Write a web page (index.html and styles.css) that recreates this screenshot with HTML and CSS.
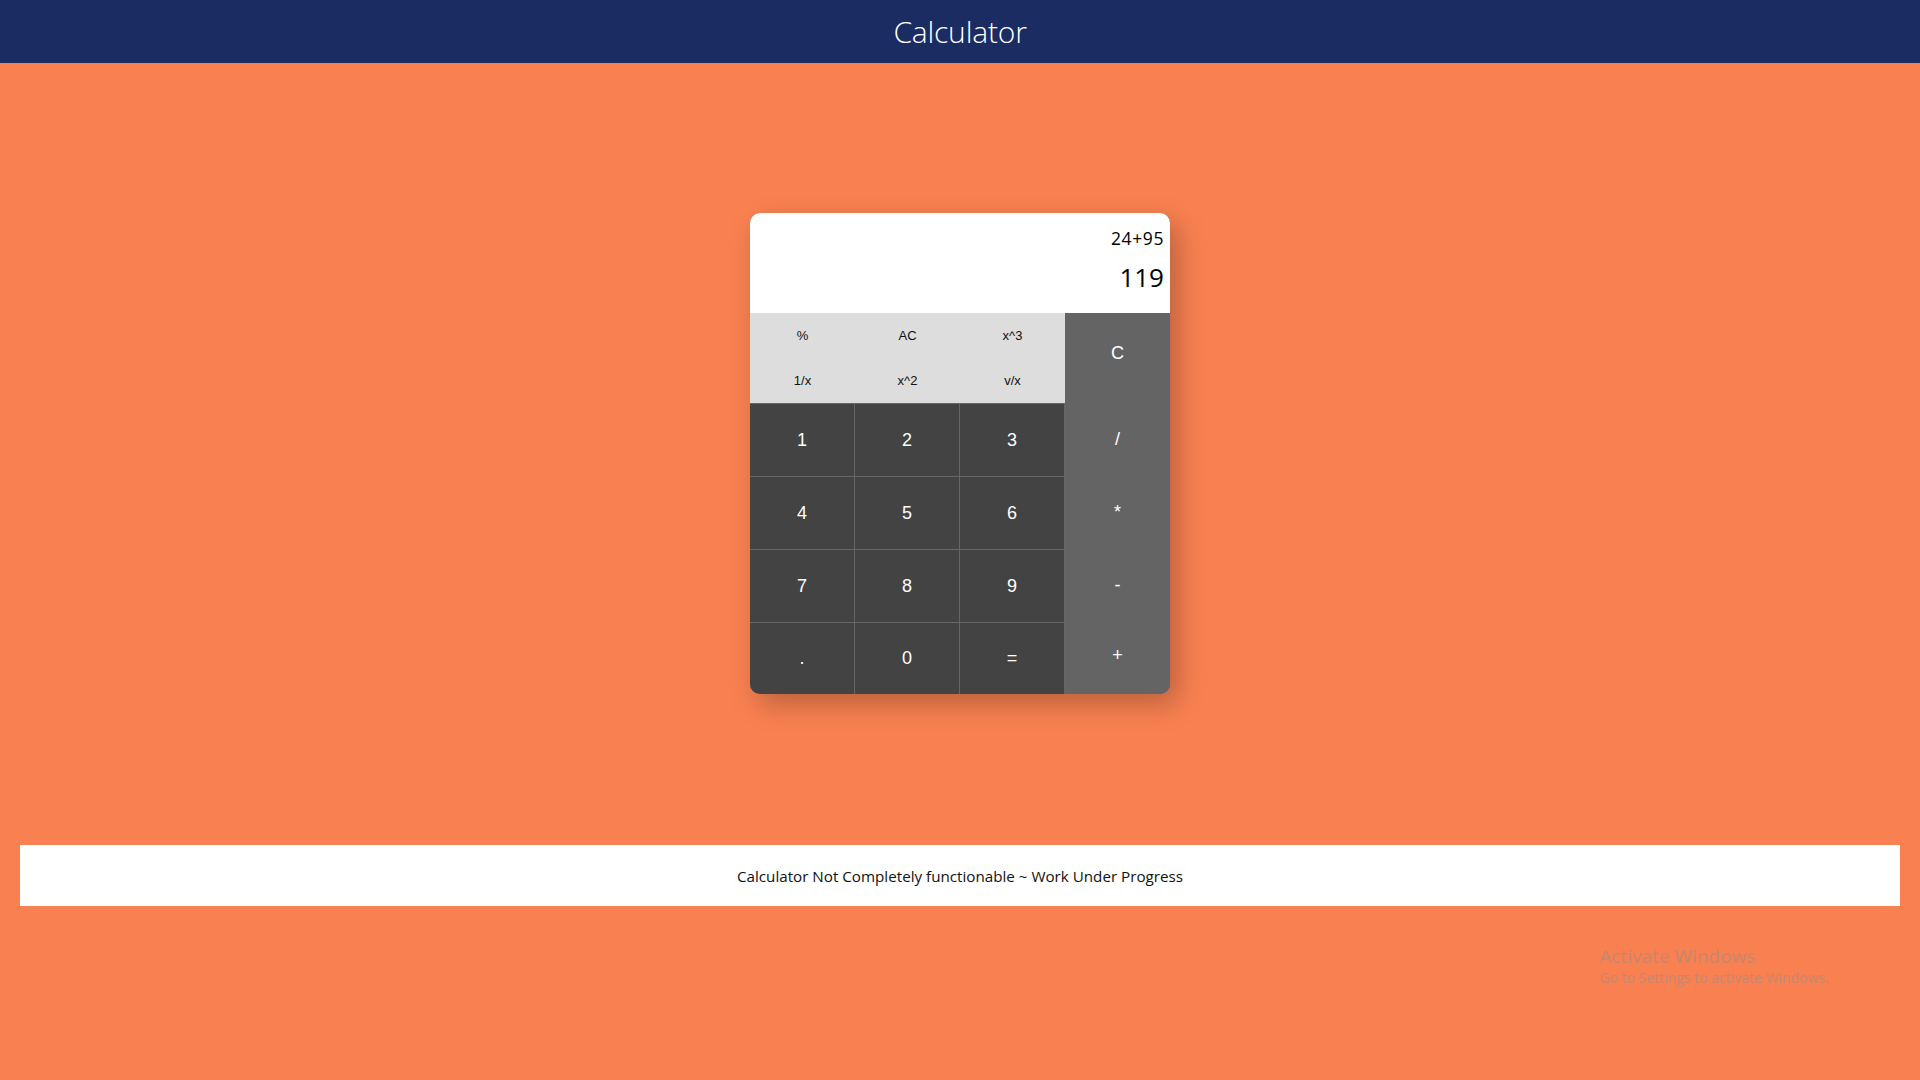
FILE: index.html
```html
<!DOCTYPE html>
<html lang="en">
<head>
<meta charset="utf-8">
<title>Calculator</title>
<link rel="stylesheet" href="styles.css">
</head>
<body>
<header class="topbar"><h1 class="title">Calculator</h1></header>
<main class="stage">
  <div class="calc">
    <div class="display">
      <div class="expr">24+95</div>
      <div class="result">119</div>
    </div>
    <div class="keys">
      <button class="key fn">%</button>
      <button class="key fn">AC</button>
      <button class="key fn">x^3</button>
      <button class="key op clear">C</button>
      <button class="key fn">1/x</button>
      <button class="key fn">x^2</button>
      <button class="key fn">v/x</button>
      <button class="key num">1</button>
      <button class="key num">2</button>
      <button class="key num">3</button>
      <button class="key op">/</button>
      <button class="key num">4</button>
      <button class="key num">5</button>
      <button class="key num">6</button>
      <button class="key op">*</button>
      <button class="key num">7</button>
      <button class="key num">8</button>
      <button class="key num">9</button>
      <button class="key op">-</button>
      <button class="key num">.</button>
      <button class="key num">0</button>
      <button class="key num">=</button>
      <button class="key op plus">+</button>
    </div>
  </div>
</main>
<footer class="note">Calculator Not Completely functionable ~ Work Under Progress</footer>
<div class="watermark">
  <div class="wm-title">Activate Windows</div>
  <div class="wm-sub">Go to Settings to activate Windows.</div>
</div>
</body>
</html>
```
FILE: styles.css
```css
html, body {
  margin: 0;
  padding: 0;
}
body {
  background: #f98151;
  font-family: "Open Sans", "Noto Sans", sans-serif;
  height: 1080px;
  overflow: hidden;
}
.topbar {
  height: 63px;
  background: #1a2c62;
  display: flex;
  align-items: center;
  justify-content: center;
}
.title {
  margin: 0;
  color: #ffffff;
  font-weight: 300;
  font-size: 30px;
  letter-spacing: -0.2px;
}
.stage {
  display: flex;
  justify-content: center;
  align-items: flex-start;
  box-sizing: border-box;
  padding-top: 150px;
  height: 782px;
}
.calc {
  width: 420px;
  height: 481px;
  border-radius: 10px;
  overflow: hidden;
  background: #646464;
  box-shadow: 8px 10px 28px rgba(0, 0, 0, 0.25);
}
.display {
  height: 100px;
  background: #ffffff;
  box-sizing: border-box;
  padding: 14px 6px 0 0;
  text-align: right;
  color: #000;
}
.expr {
  font-size: 17.5px;
  line-height: 22px;
  letter-spacing: 0.6px;
}
.result {
  font-size: 26px;
  line-height: 36px;
  margin-top: 10px;
}
.keys {
  display: grid;
  grid-template-columns: repeat(4, 105px);
  grid-template-rows: 45px 45px 73px 73px 73px 72px;
}
.key {
  border: 0;
  margin: 0;
  padding: 0;
  font-family: "Liberation Sans", Arial, sans-serif;
  cursor: pointer;
}
.fn {
  background: #dddddd;
  color: #111;
  font-size: 13px;
}
.num {
  background: #434343;
  color: #ffffff;
  font-size: 18px;
  border-top: 1px solid #666666;
  border-right: 1px solid #666666;
}
.op {
  background: #646464;
  color: #ffffff;
  font-size: 18px;
}
.clear {
  grid-column: 4;
  grid-row: 1 / span 2;
  padding-bottom: 10px;
}
.plus {
  padding-bottom: 6px;
}
.note {
  margin: 0 20px;
  height: 61px;
  background: #ffffff;
  display: flex;
  align-items: center;
  justify-content: center;
  font-size: 15.2px;
  color: #111;
}
.watermark {
  position: fixed;
  left: 1600px;
  top: 944px;
  color: rgba(150, 140, 135, 0.55);
  font-family: "Open Sans", sans-serif;
}
.wm-title {
  font-size: 19px;
  line-height: 24px;
}
.wm-sub {
  font-size: 14px;
  line-height: 20px;
}
```
